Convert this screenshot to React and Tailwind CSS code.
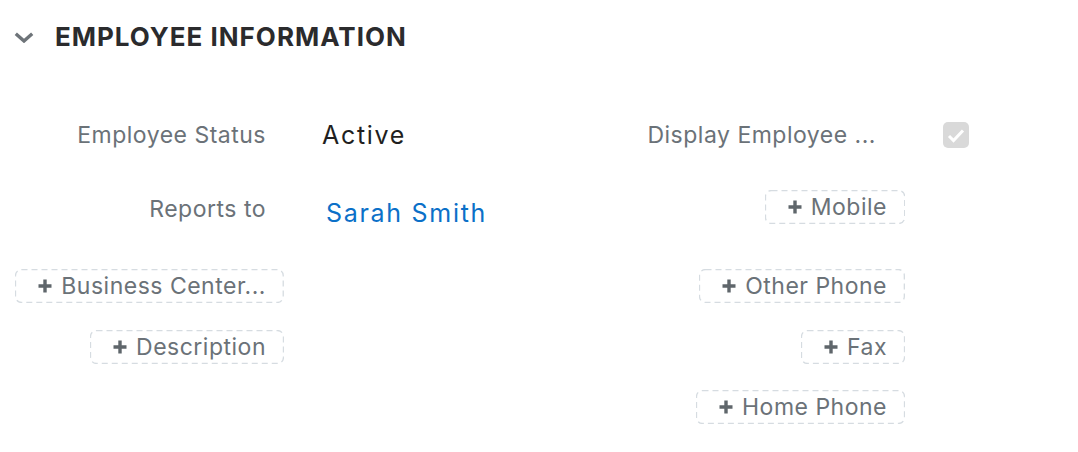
import React from "react";

const Plus = () => (
  <svg width="16" height="16" viewBox="0 0 16 16" className="shrink-0">
    <path d="M8 1.5v13M1.5 8h13" stroke="#5f666b" strokeWidth="3.4" strokeLinecap="butt" />
  </svg>
);

const AddBtn = ({ children, className = "" }) => (
  <div className={"flex items-center justify-end " + className}>
    <button className="relative flex h-[34px] items-center gap-[8px] pl-[22px] pr-[18px] text-[23px] leading-none tracking-[0.5px] text-[#6b7278] whitespace-nowrap">
      <svg className="pointer-events-none absolute inset-0 h-full w-full" aria-hidden="true">
        <rect
          x="0.5"
          y="0.5"
          rx="6"
          ry="6"
          className="h-[calc(100%-1px)] w-[calc(100%-1px)]"
          fill="none"
          stroke="#d6dce1"
          strokeWidth="1.3"
          strokeDasharray="6 4"
        />
      </svg>
      <Plus />
      <span>{children}</span>
    </button>
  </div>
);

const Label = ({ children, pr = "pr-[18px]" }) => (
  <div className={"flex items-center justify-end text-[23px] leading-none tracking-[0.5px] text-[#6b7278] whitespace-nowrap " + pr}>
    {children}
  </div>
);

export default function App() {
  return (
    <div className="h-[452px] w-[1078px] bg-white" style={{ fontFamily: "Inter, 'Noto Sans', sans-serif" }}>
      <div className="flex h-[74px] items-center pl-[14px]">
        <svg width="20" height="11" viewBox="0 0 20 11" className="mr-[21px]">
          <polyline points="1.8,1.8 10,9 18.2,1.8" fill="none" stroke="#6e7479" strokeWidth="3.4" strokeLinejoin="miter" />
        </svg>
        <h1 className="text-[26px] font-bold leading-none tracking-[1px] text-[#2b2b2d]">EMPLOYEE INFORMATION</h1>
      </div>
      <div className="grid grid-cols-[272px_273px_272px_1fr] grid-rows-[74px_74px_80px_42px_78px] gap-x-[38px] pl-[12px] pt-[24px]">
        {/* row 1 */}
        <Label>Employee Status</Label>
        <div className="flex items-center text-[25px] leading-none tracking-[1.7px] text-[#1f1f21]">Active</div>
        <Label pr="pr-[29px]">Display Employee ...</Label>
        <div className="flex items-center">
          <div className="flex h-[26px] w-[26px] items-center justify-center rounded-[5px] bg-[#d9d9d9]">
            <svg width="18" height="15" viewBox="0 0 18 15">
              <polyline points="2,8 6.5,12.5 16,2.5" fill="none" stroke="#ffffff" strokeWidth="3" />
            </svg>
          </div>
        </div>
        {/* row 2 */}
        <Label>Reports to</Label>
        <div className="flex items-center pt-[8px] text-[25px] leading-none tracking-[1.7px] text-[#0b70c8]">
          <span className="ml-[4px]">Sarah Smith</span>
        </div>
        <AddBtn className="pb-[4px]">Mobile</AddBtn>
        <div />
        {/* row 3 */}
        <AddBtn>Business Center...</AddBtn>
        <div />
        <AddBtn>Other Phone</AddBtn>
        <div />
        {/* row 4 */}
        <AddBtn>Description</AddBtn>
        <div />
        <AddBtn>Fax</AddBtn>
        <div />
        {/* row 5 */}
        <div />
        <div />
        <AddBtn>Home Phone</AddBtn>
        <div />
      </div>
    </div>
  );
}
